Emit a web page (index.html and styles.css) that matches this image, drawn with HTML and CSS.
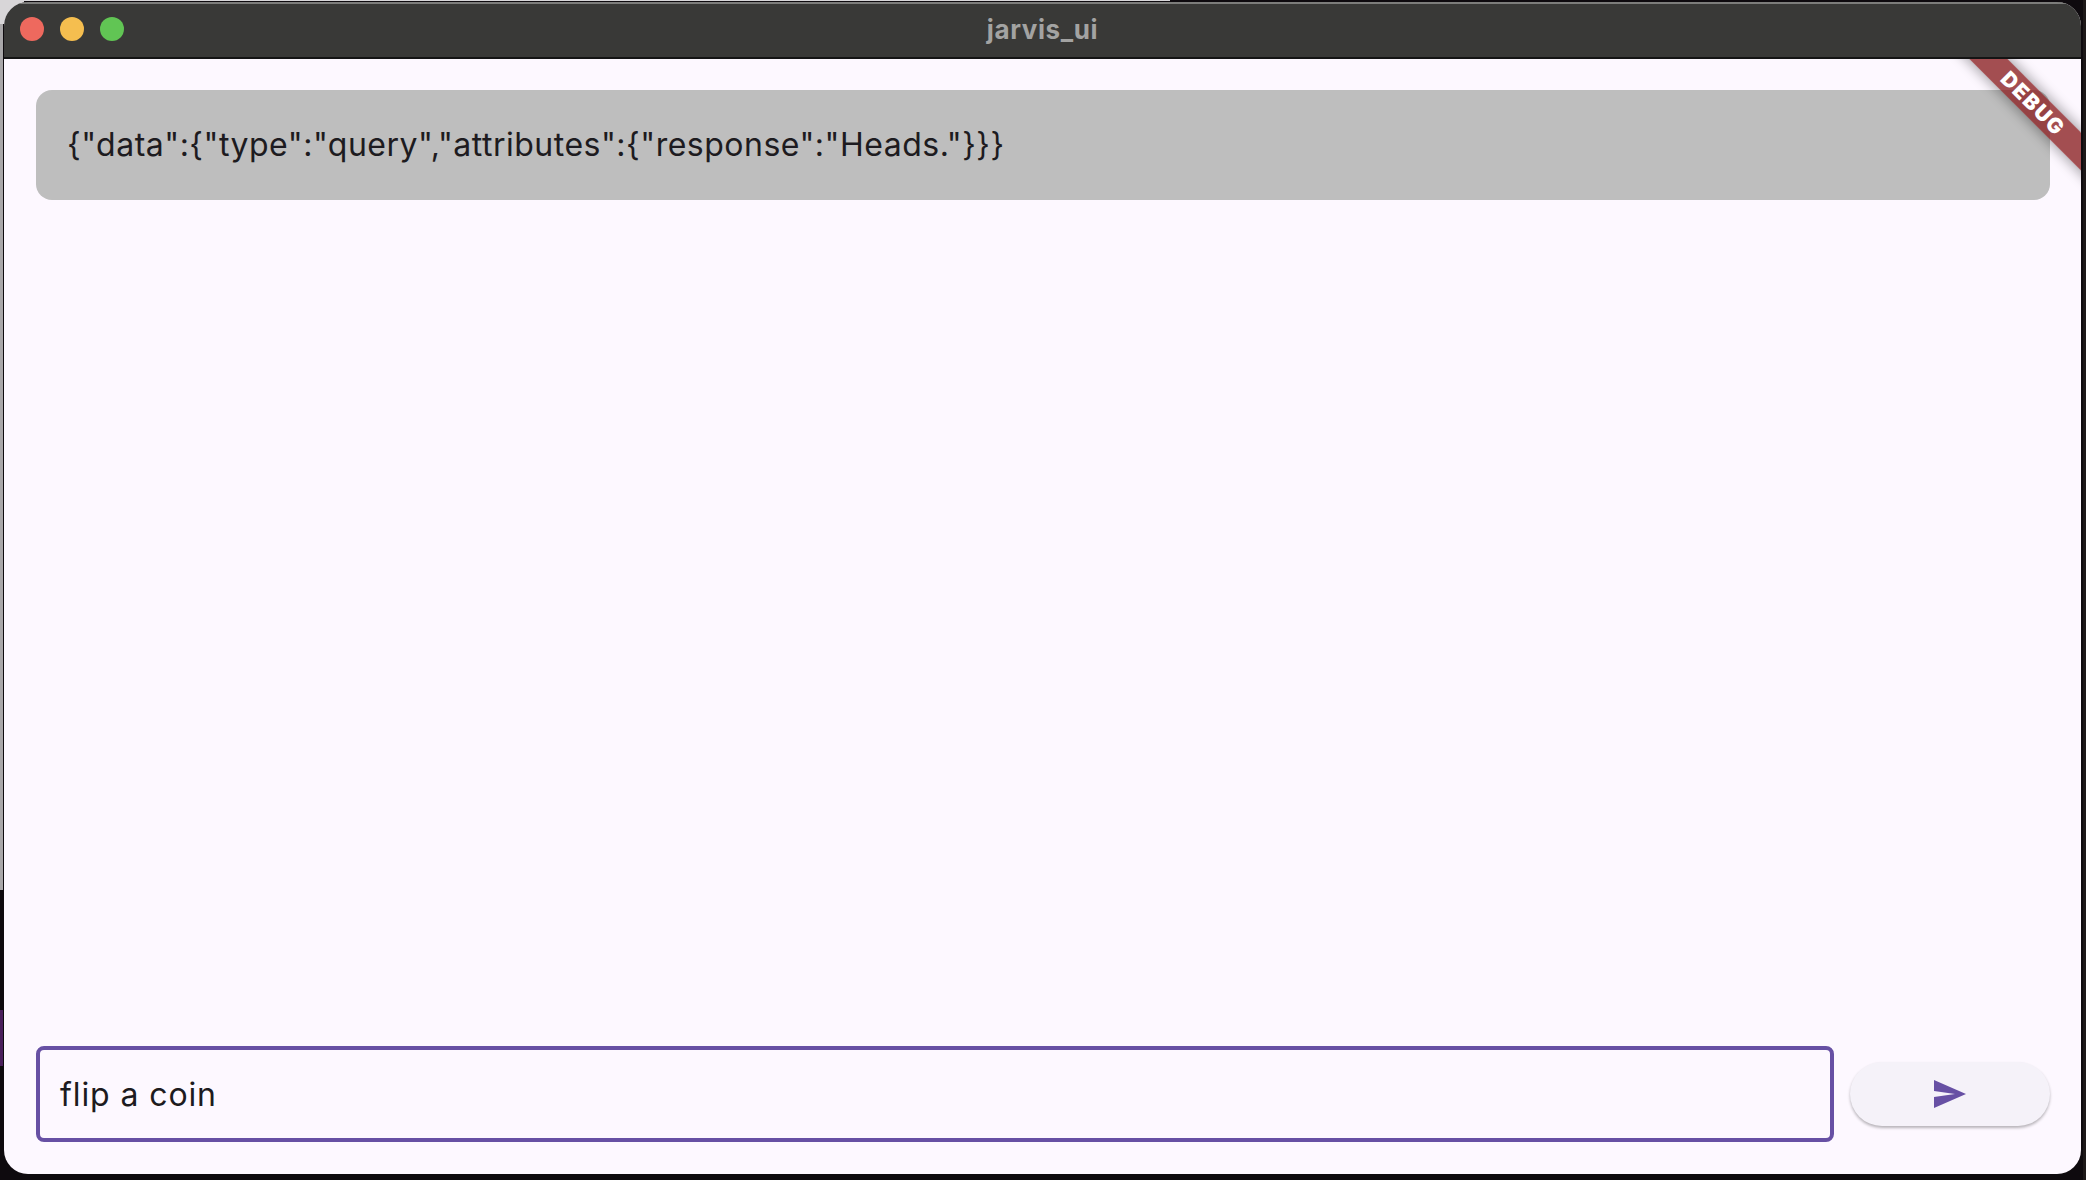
FILE: index.html
```html
<!DOCTYPE html>
<html lang="en">
<head>
<meta charset="utf-8">
<title>jarvis_ui</title>
<link rel="stylesheet" href="styles.css">
</head>
<body>
<div class="window">
  <header class="titlebar">
    <div class="lights">
      <span class="light red"></span>
      <span class="light yellow"></span>
      <span class="light green"></span>
    </div>
    <div class="title">jarvis_ui</div>
  </header>
  <main class="content">
    <div class="message">{"data":{"type":"query","attributes":{"response":"Heads."}}}</div>
    <div class="composer">
      <div class="input">flip a coin</div>
      <button class="send" type="button" aria-label="Send">
        <svg class="send-icon" viewBox="0 0 32 28" width="32" height="28"><path d="M0 0 L32 14 L0 28 L0 17 L21 14 L0 11 Z"/></svg>
      </button>
    </div>
    <div class="banner"><span class="banner-text">DEBUG</span></div>
  </main>
</div>
</body>
</html>
```
FILE: styles.css
```css
* { box-sizing: border-box; }
html, body { margin: 0; height: 100%; }
body {
  width: 2086px;
  height: 1180px;
  overflow: hidden;
  background:
    linear-gradient(#d8d6d8, #d8d6d8) 0 0 / 24px 24px no-repeat,
    linear-gradient(#d8d6d8, #d8d6d8) 0 0 / 1170px 1px no-repeat,
    linear-gradient(#a9a7a9, #a9a7a9) 0 0 / 3px 890px no-repeat,
    linear-gradient(#4a1f5c, #4a1f5c) 0 1010px / 3px 56px no-repeat,
    linear-gradient(#1d1818, #1d1818) 2083px 0 / 3px 100% no-repeat,
    #0e0a0e;
  padding: 2px 5px 6px 4px;
  font-family: Inter, "Noto Sans", sans-serif;
}
.window {
  height: 100%;
  display: flex;
  flex-direction: column;
  border-radius: 24px;
  overflow: hidden;
  background: #fdf8ff;
}
.titlebar {
  height: 57px;
  flex: none;
  position: relative;
  display: flex;
  align-items: center;
  justify-content: center;
  padding-bottom: 3px;
  background: #393937;
  border-top: 2px solid #7d7d7b;
  border-bottom: 2px solid #141414;
}
.lights {
  position: absolute;
  left: 16px;
  top: 13px;
  display: flex;
  gap: 16px;
}
.light { width: 24px; height: 24px; border-radius: 50%; }
.red { background: #ee695e; }
.yellow { background: #f5be4f; }
.green { background: #61c554; }
.title {
  font-size: 26px;
  font-weight: 700;
  letter-spacing: 0.6px;
  color: #a3a3a2;
}
.content {
  flex: 1;
  min-height: 0;
  position: relative;
  display: flex;
  flex-direction: column;
  justify-content: space-between;
  padding: 31px 31px 32px 32px;
  overflow: hidden;
}
.message {
  height: 110px;
  display: flex;
  align-items: center;
  padding: 0 31px 2px;
  background: #bebebe;
  border-radius: 16px;
  font-size: 32px;
  letter-spacing: 0.5px;
  color: #1d1b20;
}
.composer {
  display: flex;
  align-items: center;
  gap: 16px;
}
.input {
  flex: 1;
  height: 96px;
  display: flex;
  align-items: center;
  padding: 0 20px;
  border: 4px solid #6750a4;
  border-radius: 8px;
  font-size: 32px;
  letter-spacing: 0.9px;
  color: #1d1b20;
}
.send {
  width: 200px;
  height: 64px;
  flex: none;
  display: flex;
  align-items: center;
  justify-content: center;
  border: 0;
  border-radius: 32px;
  background: #f5f2f9;
  box-shadow: 0 2px 3px rgba(0,0,0,.28);
}
.send-icon { fill: #6750a4; }
.banner {
  position: absolute;
  top: 30.7px;
  right: -52.3px;
  width: 200px;
  height: 27px;
  display: flex;
  align-items: center;
  justify-content: center;
  transform: rotate(45deg);
  background: rgba(140,35,38,.8);
  box-shadow: 0 0 12px 3px rgba(0,0,0,.3);
}
.banner-text {
  font-size: 21px;
  font-weight: 900;
  line-height: 1;
  letter-spacing: 1.5px;
  color: #fff;
}
```
